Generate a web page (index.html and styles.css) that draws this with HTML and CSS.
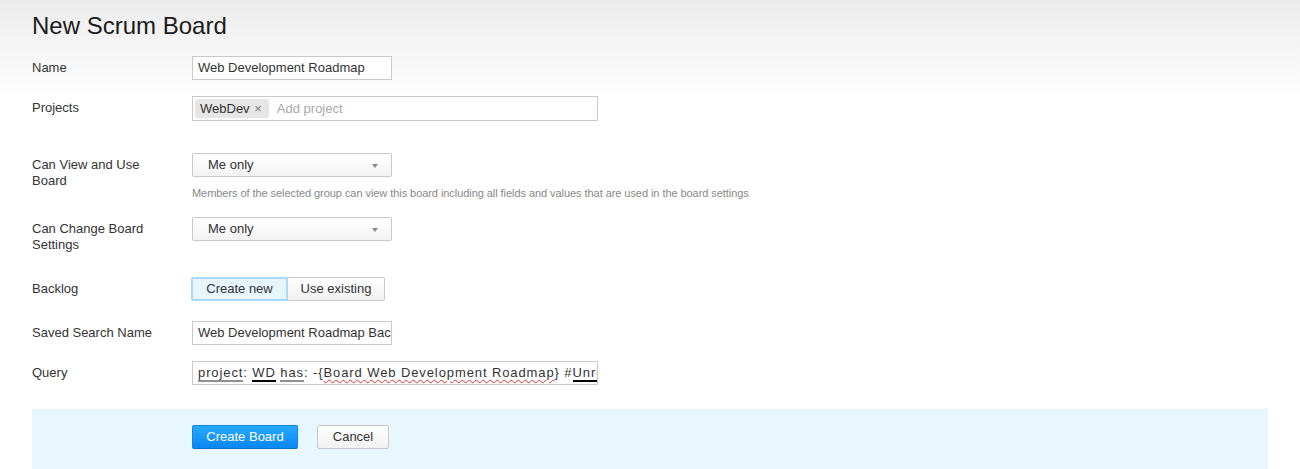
FILE: index.html
```html
<!DOCTYPE html>
<html>
<head>
<meta charset="utf-8">
<link rel="stylesheet" href="styles.css">
</head>
<body>
<div class="page">
  <h1 class="title">New Scrum Board</h1>

  <div class="row row-name">
    <div class="label">Name</div>
    <div class="field"><div class="input input-short">Web Development Roadmap</div></div>
  </div>

  <div class="row row-projects">
    <div class="label">Projects</div>
    <div class="field">
      <div class="input input-long tags">
        <span class="tag">WebDev <span class="tag-x">×</span></span>
        <span class="placeholder">Add project</span>
      </div>
    </div>
  </div>

  <div class="row row-view">
    <div class="label">Can View and Use<br>Board</div>
    <div class="field">
      <div class="select">Me only<span class="caret"></span></div>
      <div class="help">Members of the selected group can view this board including all fields and values that are used in the board settings</div>
    </div>
  </div>

  <div class="row row-change">
    <div class="label">Can Change Board<br>Settings</div>
    <div class="field">
      <div class="select">Me only<span class="caret"></span></div>
    </div>
  </div>

  <div class="row row-backlog">
    <div class="label">Backlog</div>
    <div class="field">
      <div class="btn-group">
        <div class="seg seg-active">Create new</div>
        <div class="seg">Use existing</div>
      </div>
    </div>
  </div>

  <div class="row row-saved">
    <div class="label">Saved Search Name</div>
    <div class="field"><div class="input input-short clip">Web Development Roadmap Backlog</div></div>
  </div>

  <div class="row row-query">
    <div class="label">Query</div>
    <div class="field">
      <div class="input input-long query"><span class="u-gray">project</span>: <span class="u-black">WD</span> <span class="u-gray">has</span>: -{<span class="spell">Board Web Development Roadmap</span>} #<span class="u-black">Unresolved</span></div>
    </div>
  </div>
</div>

<div class="footer">
  <div class="btn btn-primary">Create Board</div>
  <div class="btn btn-default">Cancel</div>
</div>
</body>
</html>
```

FILE: styles.css
```css
html, body {
  margin: 0;
  padding: 0;
}
body {
  font-family: "Liberation Sans", Arial, sans-serif;
  font-size: 13px;
  color: #333;
  background: linear-gradient(to bottom, #ececec 0px, #ffffff 100px) no-repeat;
  background-color: #fff;
  min-height: 469px;
  overflow: hidden;
}
.page {
  padding: 0 32px;
}
.title {
  margin: 0;
  padding-top: 12px;
  font-size: 24px;
  line-height: 28px;
  font-weight: normal;
  color: #1b1b1b;
  margin-bottom: 16px;
}
.row {
  display: flex;
  align-items: flex-start;
}
.label {
  width: 160px;
  flex: none;
  padding-top: 4px;
  line-height: 16px;
  color: #333;
}
.field {
  flex: none;
}
.row-name { margin-bottom: 16px; }
.row-projects { margin-bottom: 32px; }
.row-view { margin-bottom: 17px; }
.row-change { margin-bottom: 24px; }
.row-backlog { margin-bottom: 20px; }
.row-saved { margin-bottom: 16px; }
.row-query { margin-bottom: 24px; }

.input {
  box-sizing: border-box;
  height: 24px;
  border: 1px solid #c9c9c9;
  background: #fff;
  padding: 0 5px;
  line-height: 22px;
  color: #333;
  white-space: nowrap;
  overflow: hidden;
}
.input-short { width: 200px; }
.input-long { width: 406px; }
.tags {
  height: 25px;
  padding: 0 2px;
  display: flex;
  align-items: center;
}
.tag {
  display: inline-block;
  background: #e6e6e6;
  height: 19px;
  line-height: 19px;
  padding: 0 7px 0 5px;
  border-radius: 2px;
  color: #333;
}
.tag-x {
  color: #777;
  font-size: 13px;
  margin-left: 1px;
}
.placeholder {
  color: #a8a8a8;
  margin-left: 8px;
}
.select {
  position: relative;
  box-sizing: border-box;
  width: 200px;
  height: 24px;
  border: 1px solid #c9c9c9;
  border-radius: 2px;
  background: linear-gradient(to bottom, #ffffff, #f3f3f3);
  padding-left: 15px;
  line-height: 22px;
  color: #333;
}
.caret {
  position: absolute;
  right: 13px;
  top: 10px;
  width: 0;
  height: 0;
  border-left: 3px solid transparent;
  border-right: 3px solid transparent;
  border-top: 4px solid #8a8a8a;
}
.help {
  margin-top: 10px;
  font-size: 11px;
  line-height: 13px;
  color: #888;
  white-space: nowrap;
  letter-spacing: -0.06px;
}
.btn-group {
  display: flex;
  margin-left: -1px;
}
.seg {
  box-sizing: border-box;
  height: 24px;
  line-height: 22px;
  text-align: center;
  border: 1px solid #c9c9c9;
  background: linear-gradient(to bottom, #ffffff, #f2f2f2);
  color: #333;
  border-radius: 2px;
}
.seg-active {
  width: 97px;
  border: 2px solid #a6d9fa;
  line-height: 20px;
  background: #e7f5fe;
  border-radius: 2px 0 0 2px;
}
.seg:not(.seg-active) {
  width: 97px;
  border-left: none;
  border-radius: 0 2px 2px 0;
}
.query {
  letter-spacing: 0.9px;
}
.u-gray {
  border-bottom: 2px solid #8f8f8f;
}
.u-black {
  border-bottom: 2px solid #000;
}
.spell {
  text-decoration: underline wavy #e53030;
  text-decoration-thickness: 1px;
  text-underline-offset: 2px;
}
.footer {
  margin: 0 32px;
  background: #e8f6fe;
  height: 80px;
  padding: 16px 0 0 160px;
  box-sizing: border-box;
  display: flex;
  align-items: flex-start;
  gap: 19px;
}
.btn {
  box-sizing: border-box;
  height: 24px;
  line-height: 22px;
  text-align: center;
  border-radius: 2px;
  font-size: 13px;
}
.btn-primary {
  width: 106px;
  color: #fff;
  border: 1px solid #0f86e8;
  border-bottom-color: #0b6fc4;
  background: linear-gradient(to bottom, #27aaff, #0a87f4);
}
.btn-default {
  width: 72px;
  color: #333;
  border: 1px solid #c9c9c9;
  background: linear-gradient(to bottom, #ffffff, #f1f1f1);
}
```
